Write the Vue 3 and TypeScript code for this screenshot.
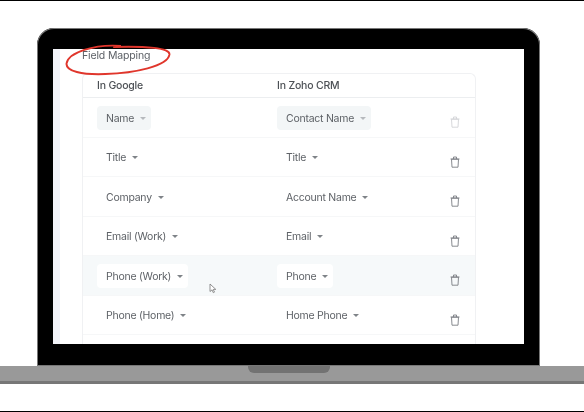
<script setup lang="ts">
type MappingRow = {
    google: string;
    zoho: string;
    state?: "first" | "hover";
};

const rows: MappingRow[] = [
    { google: "Name", zoho: "Contact Name", state: "first" },
    { google: "Title", zoho: "Title" },
    { google: "Company", zoho: "Account Name" },
    { google: "Email (Work)", zoho: "Email" },
    { google: "Phone (Work)", zoho: "Phone", state: "hover" },
    { google: "Phone (Home)", zoho: "Home Phone" },
];
</script>

<template>
    <main class="stage">
        <div class="lid">
            <div class="screen">
                <aside class="screen__strip" />
                <section class="mapping">
                    <h2 class="mapping__title">Field Mapping</h2>
                    <div class="card">
                        <header class="card__head">
                            <span class="col">In Google</span>
                            <span class="col">In Zoho CRM</span>
                        </header>
                        <div
                            v-for="row in rows"
                            :key="row.google"
                            class="row"
                            :class="row.state ? `row--${row.state}` : ''"
                        >
                            <div class="col">
                                <span class="pick">
                                    {{ row.google }}<i class="caret" />
                                </span>
                            </div>
                            <div class="col">
                                <span class="pick">
                                    {{ row.zoho }}<i class="caret" />
                                </span>
                            </div>
                            <svg class="trash" viewBox="0 0 10 12" fill="none">
                                <path d="M1.5 3.2h7l-.5 8h-6z" />
                                <path d="M.5 3h9M3.5 3V1h3v2" />
                            </svg>
                        </div>
                        <div class="row row--rest" />
                    </div>
                </section>
            </div>
        </div>
        <div class="base"><span class="base__notch" /></div>

        <svg class="circle" viewBox="0 0 110 34" fill="none">
            <path d="M58 2C30 0 4 9 2 20c-1 8 16 12 40 11 30-1 64-8 66-20C109 4 84 2 50 3" />
        </svg>
        <svg class="cursor" viewBox="0 0 8 11">
            <path d="M1 1v7.5l2-1.6 1.3 2.8 1.2-.6-1.3-2.7h2.6z" />
        </svg>
    </main>
</template>

<style>
html,
body {
    margin: 0;
    background: #fff;
}
</style>

<style scoped>
.stage {
    position: relative;
    width: 584px;
    height: 412px;
    box-sizing: border-box;
    overflow: hidden;
    padding-top: 27px;
    background: #fff;
    border-top: 1px solid #000;
    border-bottom: 1px solid #000;
    font-family: Inter, "Liberation Sans", sans-serif;
    color: #5e6267;
}

.lid {
    width: 503px;
    height: 338px;
    box-sizing: border-box;
    margin-left: 37px;
    padding: 21px 16px 22px;
    background: #000;
    border-radius: 17px 17px 0 0;
    box-shadow: inset 0 0 0 1px #777;
}

.screen {
    display: flex;
    height: 100%;
    overflow: hidden;
    background: #fff;
    filter: blur(0.35px);
}

.screen__strip {
    width: 7px;
    flex: none;
    background: #f3f4f9;
}

.mapping {
    width: 394px;
    margin-left: 22px;
}

.mapping__title {
    margin: 0;
    height: 24px;
    font-size: 10.5px;
    font-weight: 400;
    letter-spacing: -0.15px;
    line-height: 14px;
    color: #5c6066;
}

.card {
    border: 1px solid #f0f1f3;
    border-bottom: 0;
    border-radius: 6px 6px 0 0;
}

.card__head {
    display: flex;
    align-items: center;
    height: 23px;
    font-size: 10.5px;
    font-weight: 500;
    letter-spacing: -0.2px;
    color: #4c5055;
    border-bottom: 1px solid #eceef0;
}

.col {
    width: 166px;
    flex: none;
    padding-left: 14px;
}

.row {
    position: relative;
    display: flex;
    align-items: center;
    height: 39.5px;
    box-sizing: border-box;
    border-bottom: 1px solid #f6f7f8;
    font-size: 10.5px;
    letter-spacing: -0.25px;
}

.row--hover {
    background: #f6f9fa;
}

.pick {
    display: inline-flex;
    align-items: center;
    height: 24px;
    margin-top: 2px;
    padding: 0 5px 0 9px;
    border-radius: 4px;
    white-space: nowrap;
}

.row--first .pick {
    background: #f3f6f7;
}

.row--hover .pick {
    background: #fff;
}

.caret {
    width: 0;
    height: 0;
    margin-left: 6px;
    border: 3.5px solid transparent;
    border-top: 3.5px solid #7f8388;
    border-bottom: 0;
}

.row--first .caret {
    border-top-color: #b6b9bd;
}

.trash {
    position: absolute;
    right: 15px;
    top: 18px;
    width: 10px;
    height: 12px;
    stroke: #7a7e83;
    stroke-width: 0.9;
}

.row--first .trash {
    stroke: #d2d4d7;
}

.base {
    display: flex;
    justify-content: center;
    height: 15px;
    padding-right: 6px;
    background: #999;
    border-bottom: 3px solid #777;
}

.base__notch {
    width: 82px;
    height: 7px;
    background: #727272;
    border-radius: 0 0 6px 6px;
}

.circle {
    position: absolute;
    left: 64px;
    top: 43px;
    width: 108px;
    height: 33px;
    stroke: #e0362c;
    stroke-width: 2;
}

.cursor {
    position: absolute;
    left: 209px;
    top: 282px;
    width: 8px;
    height: 11px;
    fill: #fff;
    stroke: #777;
    stroke-width: 0.8;
}
</style>
